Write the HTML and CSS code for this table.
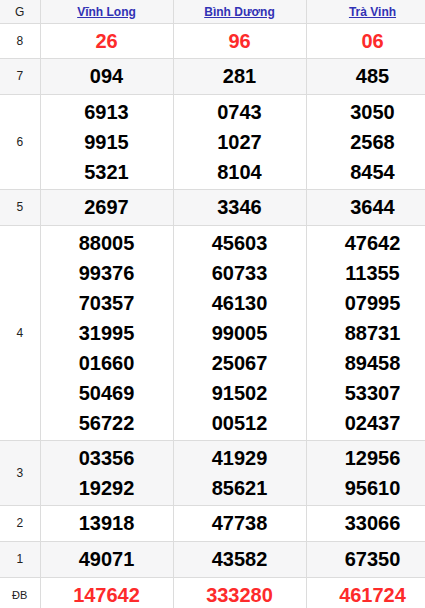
FILE: index.html
```html
<!DOCTYPE html>
<html lang="vi">
<head>
<meta charset="utf-8">
<title>Kết quả xổ số</title>
<link rel="stylesheet" href="styles.css">
</head>
<body>
<table class="kq">
  <colgroup>
    <col class="c-label">
    <col class="c-prov">
    <col class="c-prov">
    <col class="c-prov">
  </colgroup>
  <thead>
    <tr class="alt head">
      <th class="lbl">G</th>
      <th><a href="#">Vĩnh Long</a></th>
      <th><a href="#">Bình Dương</a></th>
      <th><a href="#">Trà Vinh</a></th>
    </tr>
  </thead>
  <tbody>
    <tr>
      <td class="lbl">8</td>
      <td class="red"><div>26</div></td>
      <td class="red"><div>96</div></td>
      <td class="red"><div>06</div></td>
    </tr>
    <tr class="alt single">
      <td class="lbl">7</td>
      <td><div>094</div></td>
      <td><div>281</div></td>
      <td><div>485</div></td>
    </tr>
    <tr>
      <td class="lbl">6</td>
      <td><div>6913</div><div>9915</div><div>5321</div></td>
      <td><div>0743</div><div>1027</div><div>8104</div></td>
      <td><div>3050</div><div>2568</div><div>8454</div></td>
    </tr>
    <tr class="alt single">
      <td class="lbl">5</td>
      <td><div>2697</div></td>
      <td><div>3346</div></td>
      <td><div>3644</div></td>
    </tr>
    <tr>
      <td class="lbl">4</td>
      <td><div>88005</div><div>99376</div><div>70357</div><div>31995</div><div>01660</div><div>50469</div><div>56722</div></td>
      <td><div>45603</div><div>60733</div><div>46130</div><div>99005</div><div>25067</div><div>91502</div><div>00512</div></td>
      <td><div>47642</div><div>11355</div><div>07995</div><div>88731</div><div>89458</div><div>53307</div><div>02437</div></td>
    </tr>
    <tr class="alt">
      <td class="lbl">3</td>
      <td><div>03356</div><div>19292</div></td>
      <td><div>41929</div><div>85621</div></td>
      <td><div>12956</div><div>95610</div></td>
    </tr>
    <tr class="single">
      <td class="lbl">2</td>
      <td><div>13918</div></td>
      <td><div>47738</div></td>
      <td><div>33066</div></td>
    </tr>
    <tr class="alt single">
      <td class="lbl">1</td>
      <td><div>49071</div></td>
      <td><div>43582</div></td>
      <td><div>67350</div></td>
    </tr>
    <tr class="single">
      <td class="lbl small">ĐB</td>
      <td class="red"><div>147642</div></td>
      <td class="red"><div>333280</div></td>
      <td class="red"><div>461724</div></td>
    </tr>
  </tbody>
</table>
</body>
</html>
```
FILE: styles.css
```css
html, body {
  margin: 0;
  padding: 0;
  background: #fff;
  overflow: hidden;
}
body {
  font-family: "Liberation Sans", Arial, sans-serif;
  color: #000;
}
.kq {
  border-collapse: collapse;
  table-layout: fixed;
  width: 439px;
}
.c-label { width: 40px; }
.c-prov { width: 133px; }
.kq th,
.kq td {
  border: 1px solid #dcdcdc;
  text-align: center;
  vertical-align: middle;
  padding: 2px 0;
}
.kq tr:first-child th { border-top: none; }
.kq th:first-child,
.kq td:first-child { border-left: none; }
.alt { background: #f6f6f7; }
.head th {
  height: 20px;
  padding: 2px 0 1px;
  font-size: 12px;
  font-weight: bold;
  line-height: 20px;
}
.head th.lbl { font-weight: normal; color: #222; }
.head a {
  color: #3131b5;
  text-decoration: underline;
}
.kq td {
  font-size: 20px;
  font-weight: bold;
  line-height: 30px;
}
.kq .single td { padding: 2px 0 3px; }
.kq td.lbl {
  font-size: 12px;
  font-weight: normal;
  color: #222;
  line-height: 16px;
}
.kq td.lbl.small { font-size: 11px; }
.kq td.red { color: #fd2b2b; }
```
